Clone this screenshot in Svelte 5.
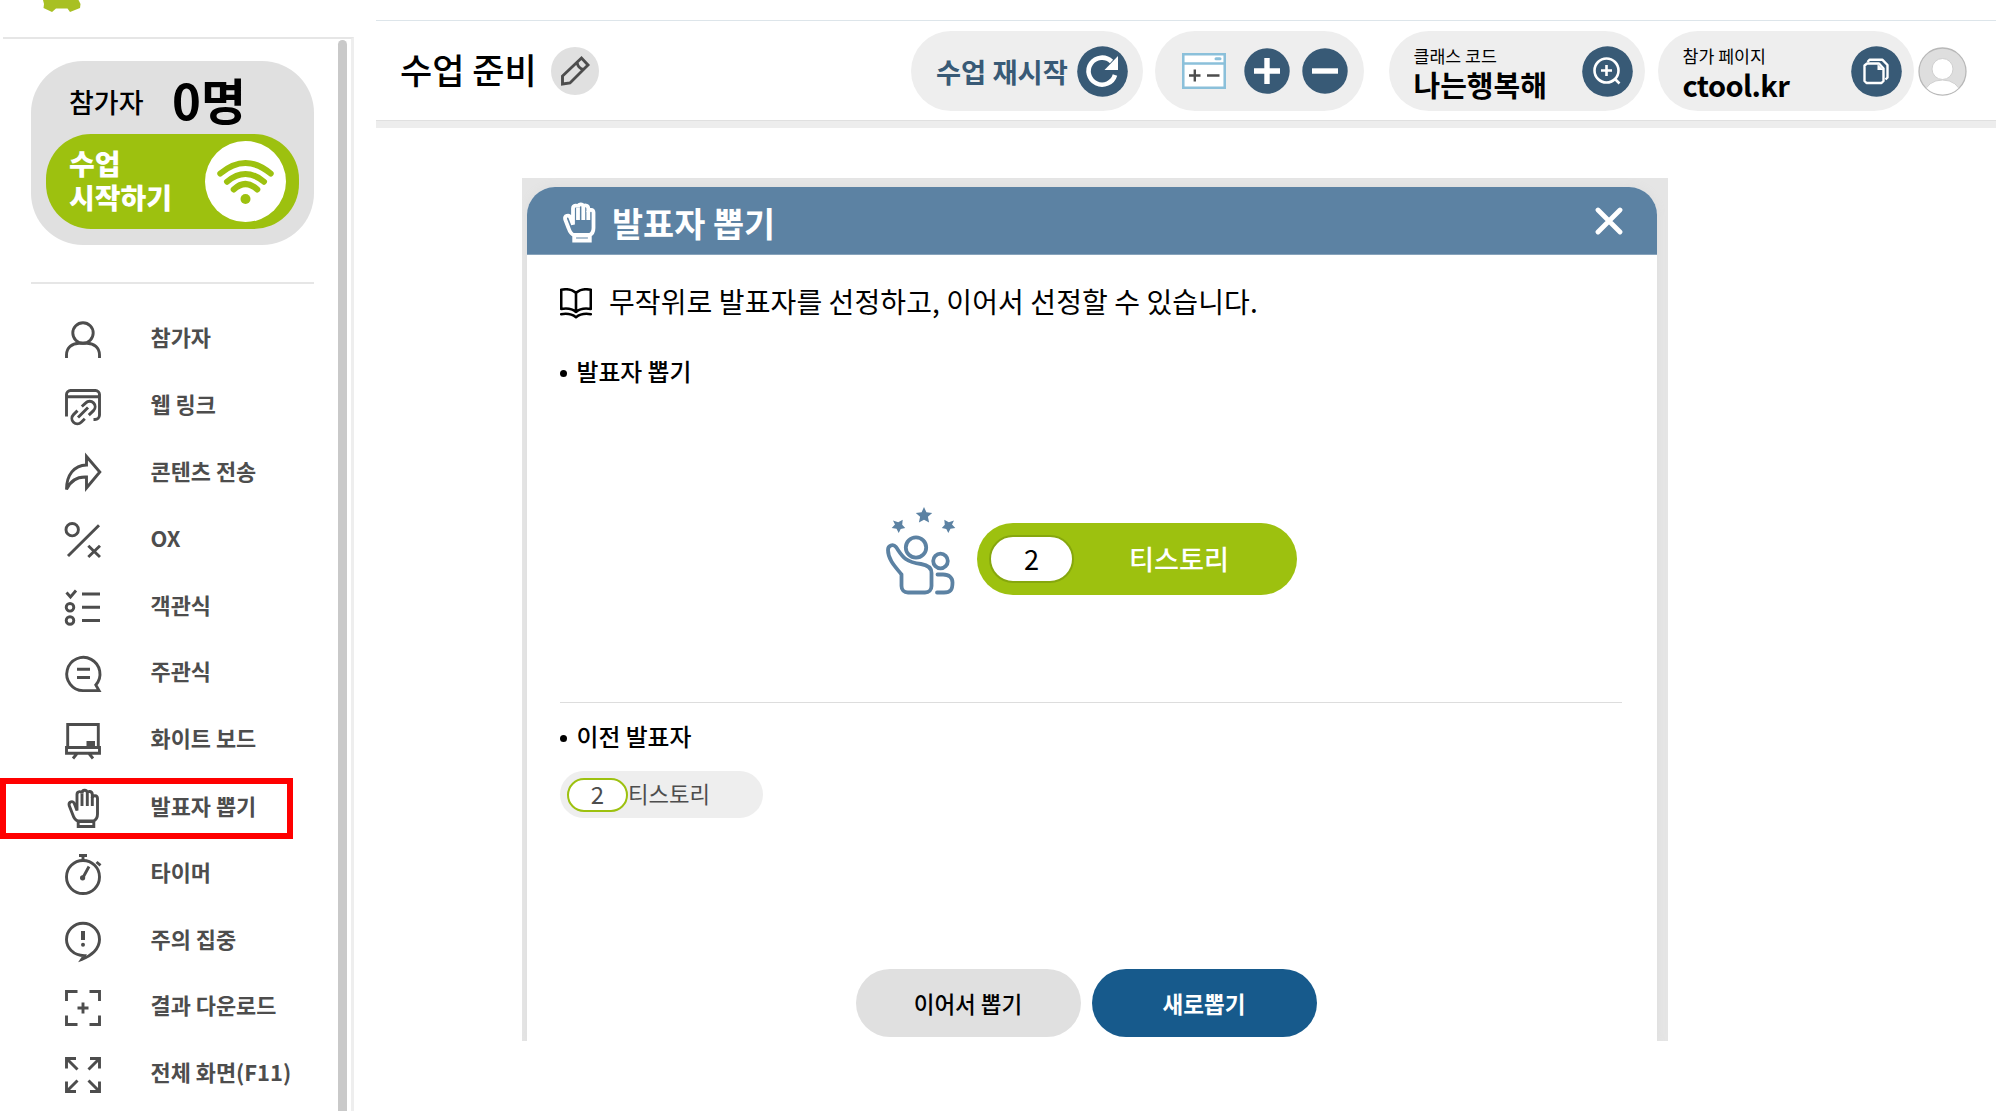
<script>
	const hand = `<path d="M13 32C9.5 31 8.5 28 7.5 25L4.2 16.5C3.2 12.5 8 11.3 9.3 14.5L12 21.5V5.5C12 1.8 17 1.8 17 4.5C17 .3 22.3 .3 22.3 4C22.5 1.5 27.3 2 27.3 5.5V9C27.5 6 32.5 6 32.5 9.5V25C32.5 29 31 31 28.5 32Z"/>
		<path d="M17 4.5V17M22.3 4V17M27.3 8V17"/><path d="M13.2 32.5h15.6v5H13.2z"/>`;

	const menu = [
		{ label: '참가자', icon: '<circle cx="18" cy="11" r="10.2"/><path d="M1.5 36V33C1.5 25.5 7 21.5 14 21.2H22C29 21.5 34.5 25.5 34.5 33V36"/>' },
		{ label: '웹 링크', icon: '<path d="M1.5 27.5V5.5a4 4 0 0 1 4-4h25a4 4 0 0 1 4 4V26a4.5 4.5 0 0 1-4.5 4.5h-1.5M1.5 7.7h33"/><path d="M16.8 17.5l4-3.6a5.4 5.4 0 0 1 7.7 7.7l-4.7 4.5M19.8 29.8l-3.6 3.5a5.4 5.4 0 0 1-7.7-7.7l4-4M13 28.5l10-10"/>' },
		{ label: '콘텐츠 전송', icon: '<path d="M21.5 1.5L34.8 17 21.5 33V22C12 21.5 5.5 25.5 1.5 34.5C1.5 20 9 10.3 21.5 10Z"/>' },
		{ label: 'OX', icon: '<circle cx="7.2" cy="7.7" r="6.2"/><path d="M3 34L34 3.2M23.3 23.8L35 35M35 23.8L23.3 35"/>' },
		{ label: '객관식', icon: '<path d="M1.5 3.5l4 4.5 5.5-6.5M17 5h18M17 18.3h18M17 31.5h18"/><circle cx="5" cy="18.3" r="3.8"/><circle cx="5" cy="31.5" r="3.8"/>' },
		{ label: '주관식', icon: '<path d="M18 34.6H34L30.8 29A16.6 16.6 0 1 0 18 34.6ZM12 13.3h13M12 21.5h13"/>' },
		{ label: '화이트 보드', icon: '<path d="M2.7 24V1.5h30.6V24M1.5 24.5h33v5.8h-33zM12 30.5l-4 5M24 30.5l4 5"/><path d="M21.5 18h8.5v6h-8.5z" fill="#4d4d4d" stroke="none"/>' },
		{ label: '발표자 뽑기', icon: hand, active: true, box: 39 },
		{ label: '타이머', icon: '<circle cx="18" cy="23" r="16.5"/><path d="M14 1.5h8M18 1.5v5M31.5 8l4 3.4M18 23.5l6-11"/><circle cx="17.6" cy="23.8" r="2.6" fill="#4d4d4d" stroke="none"/>', box: 41 },
		{ label: '주의 집중', icon: '<path d="M19.3 33.6C8 33.3 1.5 25.5 1.5 17.5A16.5 16.2 0 0 1 34.5 17.5C34.5 27 26 34 16.8 37.3Z"/><path d="M18 9v9" stroke-width="4"/><circle cx="18" cy="22.8" r="2" fill="#4d4d4d" stroke="none"/>', box: 39 },
		{ label: '결과 다운로드', icon: '<path d="M1.5 11V1.5H12.5M24.5 1.5H34.5V11M1.5 25.5V34.5H12.5M24.5 34.5H34.5V25.5M18 12.5v11M12.5 18h11"/>' },
		{ label: '전체 화면(F11)', icon: '<path d="M1.5 11.5V1.5H11M1.5 1.5L12.5 12.5M25 1.5H34.5V11.5M34.5 1.5L23.5 12.5M1.5 24.5V34.5H11M1.5 34.5L12.5 23.5M25 34.5H34.5V24.5M34.5 34.5L23.5 23.5"/>' }
	];

	let participants = 0;
	let picked = { no: 2, name: '티스토리' };
	let history = [{ no: 2, name: '티스토리' }];
</script>

<div class="page">
	<aside>
		<div class="logo">
			<svg width="40" height="13" viewBox="0 0 40 13">
				<path d="M1 0L2 4 1.500 8 10 12 14 8.500H25.500L28 12 38 8 38.500 4 36.500 0Z" fill="#a8c023" />
			</svg>
		</div>
		<div class="side">
			<div class="side-body">
				<div class="status">
					<div class="count">
						<span>참가자</span>
						<strong>{participants}명</strong>
					</div>
					<button class="start">
						<span>수업<br />시작하기</span>
						<svg width="81" height="81" viewBox="0 0 81 81">
							<circle cx="40.5" cy="40.5" r="40.5" fill="#fff" />
							<path d="M15.3 32.5Q40.5 11.5 65.7 32.5M22 40.7Q40.5 25.3 59 40.7M28.7 48.5Q40.5 37.5 52.3 48.5" fill="none" stroke="#9dc10f" stroke-width="6" stroke-linecap="round" />
							<circle cx="40.5" cy="58" r="5" fill="#9dc10f" />
						</svg>
					</button>
				</div>
				<nav>
					{#each menu as item}
						<a href="#menu" class:active={item.active}>
							<svg width="36" height={item.box || 36} viewBox="0 0 36 {item.box || 36}" class="line">
								{@html item.icon}
							</svg>
							<span>{item.label}</span>
						</a>
					{/each}
				</nav>
			</div>
			<div class="scrollbar"></div>
		</div>
	</aside>

	<main>
		<header>
			<h1>수업 준비</h1>
			<button class="edit">
				<svg width="28" height="30" viewBox="0 0 28 30" class="line">
					<path d="M1.5 28V20L20.5 2 27 9 9 27Z M16 6.5C17 11 19 13 22.5 13.5" />
				</svg>
			</button>

			<div class="pill restart">
				<span>수업 재시작</span>
				<svg width="51" height="51" viewBox="0 0 51 51">
					<circle cx="25.5" cy="25.5" r="25.3" fill="#385a76" />
					<path d="M38 29A13.5 13.5 0 1 1 34.5 15.5" fill="none" stroke="#fff" stroke-width="4.6" />
					<path d="M41 10V24H27.5Z" fill="#fff" />
				</svg>
			</div>

			<div class="pill zoom">
				<svg width="44" height="36" viewBox="0 0 44 36">
					<path d="M1.2 1.2H42.8V34.8H1.2Z M1.2 10.5H42.8" fill="#fff" stroke="#8bc0da" stroke-width="2.7" />
					<path d="M34 5.8h4" stroke="#8bc0da" stroke-width="3" stroke-linecap="round" />
					<path d="M7 22.5H18.5M12.8 16.5V28.5M25 22.5H37.5" stroke="#4d4d4d" stroke-width="2.4" />
				</svg>
				<svg width="46" height="46" viewBox="0 0 46 46">
					<circle cx="23" cy="23" r="22.7" fill="#385a76" />
					<path d="M10 23H36M23 10V36" stroke="#fff" stroke-width="5.4" />
				</svg>
				<svg width="46" height="46" viewBox="0 0 46 46">
					<circle cx="23" cy="23" r="22.7" fill="#385a76" />
					<path d="M10 23H36" stroke="#fff" stroke-width="5.4" />
				</svg>
			</div>

			<div class="pill info code">
				<div><small>클래스 코드</small><b>나는행복해</b></div>
				<svg width="51" height="51" viewBox="0 0 51 51">
					<circle cx="25.5" cy="25.5" r="25.3" fill="#385a76" />
					<g fill="none" stroke="#fff" stroke-width="2.6">
						<circle cx="24.5" cy="24.5" r="12" />
						<path d="M32.5 32.5l5 5M19 24.5h11M24.5 19v11" />
					</g>
				</svg>
			</div>

			<div class="pill info join">
				<div><small>참가 페이지</small><b>ctool.kr</b></div>
				<svg width="51" height="51" viewBox="0 0 51 51">
					<circle cx="25.5" cy="25.5" r="25.3" fill="#385a76" />
					<g fill="none" stroke="#fff" stroke-width="2.4" stroke-linejoin="round">
						<path d="M16 17.5H28L32.5 22.5V35L30.5 37H15.5L13.5 35V19.5Z" />
						<path d="M16.5 16L18.5 13.8H31.5L36.5 19V31.5L34.5 33.5" />
					</g>
					<path d="M26.5 18L32.5 24H26.5Z" fill="#fff" />
				</svg>
			</div>

			<svg class="avatar" width="49" height="49" viewBox="0 0 49 49">
				<clipPath id="face"><circle cx="24.5" cy="24.5" r="23" /></clipPath>
				<circle cx="24.5" cy="24.5" r="23.5" fill="#dedede" stroke="#b8b8b8" stroke-width="1.3" />
				<g clip-path="url(#face)" fill="#fff" stroke="#cfcfcf">
					<ellipse cx="24.5" cy="46" rx="17.5" ry="13" />
					<circle cx="24.5" cy="22" r="10.5" />
				</g>
			</svg>
		</header>

		<div class="frame">
			<section class="modal">
				<div class="modal-head">
					<svg width="36" height="40" viewBox="0 0 36 40" class="line white">{@html hand}</svg>
					<h2>발표자 뽑기</h2>
					<svg class="close" width="28" height="28" viewBox="0 0 28 28">
						<path d="M3 3L25 25M25 3L3 25" stroke="#fff" stroke-width="4.8" stroke-linecap="round" />
					</svg>
				</div>
				<div class="modal-body">
					<div class="guide">
						<svg width="32" height="31" viewBox="0 0 32 31" fill="none" stroke="#000" stroke-width="2.6" stroke-linejoin="round" stroke-linecap="round">
							<path d="M16 5C12 1.2 6 .8 1.2 1.8V21C7 20 12 20.5 16 24C20 20.5 25 20 30.8 21V1.8C26 .8 20 1.2 16 5ZM16 5V24" />
							<path d="M1.2 26.2C7 25.2 12 26 16 29.2C20 26 25 25.2 30.8 26.2" />
						</svg>
						<p>무작위로 발표자를 선정하고, 이어서 선정할 수 있습니다.</p>
					</div>
					<h3><span>발표자 뽑기</span></h3>
					<div class="picked">
						<svg width="70" height="88" viewBox="0 0 70 88">
							<g fill="#5c82a3">
								<path d="M38 0l2.4 5.2 5.8.7-4.3 3.9 1.2 5.7-5.1-2.8-5.1 2.8 1.2-5.7-4.3-3.9 5.8-.7z" />
								<path d="M7 13.500l5.200 1.700 4.500-2.500-.500 5 3 3.300-4.500 1-2 4-2.200-4.200-4.800-.8 3.300-3.500z" />
								<path d="M68 13.500l-5.200 1.700-4.500-2.500 .500 5-3 3.300 4.500 1 2 4 2.200-4.200 4.800-.8-3.300-3.500z" />
							</g>
							<g fill="none" stroke="#5c82a3" stroke-width="3.8" stroke-linecap="round" stroke-linejoin="round">
								<circle cx="30" cy="40.500" r="10.200" />
								<circle cx="54.500" cy="54" r="7.300" />
								<path d="M10 40C7 36.500 2 38.500 2 43C2 53.500 11 61.500 15.500 67.500V79C15.500 83 18 85.500 22 85.500H39C43 85.500 45.500 83 45.500 79V66C45.500 61 41.500 58 35 57C18 55 16 48.500 10 40Z" />
								<path d="M51.500 67.500H57C63.500 67.500 66.500 71 66.500 75.500C66.500 83 64.500 85.500 58 85.500H51" />
							</g>
						</svg>
						<div class="winner">
							<em>{picked.no}</em>
							<span>{picked.name}</span>
						</div>
					</div>
					<h3><span>이전 발표자</span></h3>
					<div class="history">
						{#each history as person}
							<div class="chip"><em>{person.no}</em><span>{person.name}</span></div>
						{/each}
					</div>
					<div class="actions">
						<button>이어서 뽑기</button>
						<button class="primary">새로뽑기</button>
					</div>
				</div>
			</section>
		</div>
	</main>
</div>

<style>
	:global(body) {
		margin: 0;
		background: #fff;
		overflow: hidden;
	}

	.page {
		display: flex;
		width: 1996px;
		height: 1111px;
		overflow: hidden;
		background: #fff;
		color: #000;
		font-family: "Noto Sans CJK KR", "Noto Sans", sans-serif;
	}

	.page * {
		box-sizing: border-box;
	}

	svg {
		display: block;
		flex: none;
	}

	button {
		border: 0;
		padding: 0;
		font: inherit;
		color: inherit;
	}

	h1, h2, h3, p {
		margin: 0;
		font-weight: 400;
	}

	em {
		font-style: normal;
	}

	.line {
		fill: none;
		stroke: #4d4d4d;
		stroke-width: 2.9;
		overflow: visible;
	}

	aside {
		width: 376px;
		flex: none;
	}

	.logo {
		height: 37px;
		padding-left: 42px;
	}

	.side {
		display: flex;
		width: 351px;
		height: 1074px;
		margin-left: 3px;
		border-top: 2px solid #e6e6e6;
		border-right: 3px solid #eee;
	}

	.side-body {
		width: 311px;
		margin: 22px 24px 0 -3px;
	}

	.status {
		width: 283px;
		height: 184px;
		margin-left: 31px;
		padding: 0 15px;
		border-radius: 52px;
		background: #e0e0e0;
	}

	.count {
		display: flex;
		align-items: center;
		height: 73px;
		padding-left: 23px;
	}

	.count span {
		width: 103px;
		padding-top: 9px;
		font-size: 27px;
		font-weight: 500;
		line-height: 40px;
	}

	.count strong {
		padding-top: 2px;
		font-size: 49px;
		line-height: 60px;
		white-space: nowrap;
	}

	.start {
		display: flex;
		align-items: center;
		justify-content: space-between;
		width: 253px;
		height: 95px;
		padding: 0 13px 0 23px;
		border-radius: 45px;
		background: #9dc10f;
		color: #fff;
		font-size: 28px;
		font-weight: 900;
		line-height: 34px;
		text-align: left;
	}

	.start span {
		padding-bottom: 3px;
	}

	nav {
		width: 283px;
		margin: 37px 0 0 31px;
		padding-top: 22.500px;
		border-top: 2px solid #e6e6e6;
	}

	nav a {
		display: flex;
		align-items: center;
		gap: 49.500px;
		width: 262px;
		height: 66.8px;
		padding-left: 34px;
		color: #4d4d4d;
		font-size: 21.900px;
		font-weight: 700;
		line-height: 30px;
		text-decoration: none;
		white-space: nowrap;
	}

	nav a span {
		padding-bottom: 5px;
	}

	nav a.active {
		width: 293px;
		height: 61px;
		margin: 3.500px 0 2.300px -31px;
		padding-left: 59px;
		border: 6px solid #f00;
	}

	.scrollbar {
		flex: none;
		width: 9px;
		margin: 1px 0 0 3px;
		border-radius: 5px 5px 0 0;
		background: #c9c9c9;
	}

	main {
		width: 1620px;
		padding-top: 20px;
	}

	header {
		display: flex;
		align-items: center;
		height: 108px;
		padding-left: 24px;
		border-top: 1px solid #dde5ea;
		border-bottom: 7px solid #ededed;
		box-shadow: inset 0 -1px #e0e0e0;
	}

	h1 {
		width: 151px;
		padding-bottom: 4px;
		font-size: 35px;
		font-weight: 500;
		line-height: 50px;
		white-space: nowrap;
	}

	.edit {
		display: flex;
		align-items: center;
		justify-content: center;
		width: 48px;
		height: 48px;
		margin-right: 312px;
		border-radius: 50%;
		background: #e0e0e0;
	}

	.pill {
		display: flex;
		align-items: center;
		flex: none;
		height: 80px;
		border-radius: 40px;
		background: #eee;
		white-space: nowrap;
	}

	.restart {
		width: 232px;
		margin-right: 11.500px;
		padding: 0 15px 0 25px;
		justify-content: space-between;
		color: #385a76;
		font-size: 27.300px;
		font-weight: 700;
		line-height: 40px;
	}

	.zoom {
		width: 209px;
		margin-right: 25px;
		padding-left: 27px;
		gap: 11.500px;
	}

	.zoom svg:first-child {
		margin-right: 7px;
	}

	.info {
		justify-content: space-between;
		width: 256px;
		padding: 0 12px 0 25px;
	}

	.code {
		margin-right: 13px;
	}

	.info small {
		display: block;
		padding-top: 3px;
		font-size: 17.300px;
		line-height: 24px;
	}

	.info b {
		display: block;
		margin-top: -1px;
		font-size: 29px;
		line-height: 34px;
	}

	.join b {
		letter-spacing: -.6px;
	}

	.avatar {
		margin-left: 4px;
	}

	.frame {
		width: 1146px;
		height: 863px;
		margin: 50px 0 0 146px;
		padding: 9px 11px 0 4.500px;
		background: #e5e5e5;
		overflow: hidden;
	}

	.modal {
		height: 854px;
		border-radius: 28px 28px 0 0;
		background: #fff;
		box-shadow: 0 0 10px #ddd;
		overflow: hidden;
	}

	.modal-head {
		display: flex;
		align-items: center;
		height: 68px;
		padding: 0 34px 0 34px;
		border-bottom: 1px solid #87a3bb;
		background: #5c82a3;
		color: #fff;
	}

	.white {
		margin-top: 4px;
		stroke: #fff;
		stroke-width: 3.8;
	}

	h2 {
		margin-left: 15.500px;
		padding-top: 4px;
		font-size: 33.800px;
		font-weight: 700;
		line-height: 50px;
	}

	.close {
		margin-left: auto;
	}

	.modal-body {
		padding: 27px 35px 0 33.500px;
	}

	.guide {
		display: flex;
		align-items: center;
		gap: 17px;
		height: 42px;
	}

	.guide p {
		padding-bottom: 5px;
		font-size: 28px;
		letter-spacing: .1px;
		line-height: 42px;
	}

	h3 {
		display: flex;
		align-items: center;
		gap: 9.500px;
		height: 36px;
		font-size: 23.800px;
		font-weight: 500;
		line-height: 32px;
	}

	h3::before {
		content: "";
		width: 7px;
		height: 7px;
		border-radius: 50%;
		background: #000;
	}

	h3 span {
		padding-bottom: 4px;
	}

	.guide + h3 {
		margin-top: 31px;
	}

	.picked {
		display: flex;
		gap: 21px;
		height: 312px;
		margin-bottom: 17px;
		padding: 116px 0 0 326px;
		border-bottom: 1px solid #ddd;
	}

	.winner {
		display: flex;
		align-items: center;
		width: 320px;
		height: 72px;
		margin-top: 16px;
		padding-left: 12px;
		border-radius: 36px;
		background: #9dc10f;
		color: #fff;
		font-size: 27.200px;
		font-weight: 500;
	}

	.winner em {
		width: 85px;
		height: 48px;
		border: 2px solid #86a70d;
		border-radius: 24px;
		background: #fff;
		color: #000;
		font-weight: 400;
		line-height: 42px;
		text-align: center;
	}

	.winner span {
		margin-left: 55px;
		padding-bottom: 3px;
	}

	.history {
		height: 183px;
		padding-top: 15px;
	}

	.chip {
		display: flex;
		align-items: center;
		width: 203px;
		height: 47px;
		padding-left: 7px;
		border-radius: 24px;
		background: #eee;
		color: #4d4d4d;
		font-size: 22.300px;
	}

	.chip em {
		width: 61px;
		height: 34px;
		border: 2px solid #9dc10f;
		border-radius: 17px;
		background: #fff;
		font-size: 24px;
		line-height: 27px;
		text-align: center;
	}

	.chip span {
		padding-bottom: 4px;
	}

	.actions {
		display: flex;
		gap: 11px;
		margin: 29.500px 0 0 295.500px;
	}

	.actions button {
		width: 225px;
		height: 68px;
		border-radius: 34px;
		background: #e0e0e0;
		font-size: 22.500px;
		font-weight: 500;
	}

	.actions .primary {
		background: #175a8c;
		color: #fff;
		font-weight: 700;
	}
</style>
